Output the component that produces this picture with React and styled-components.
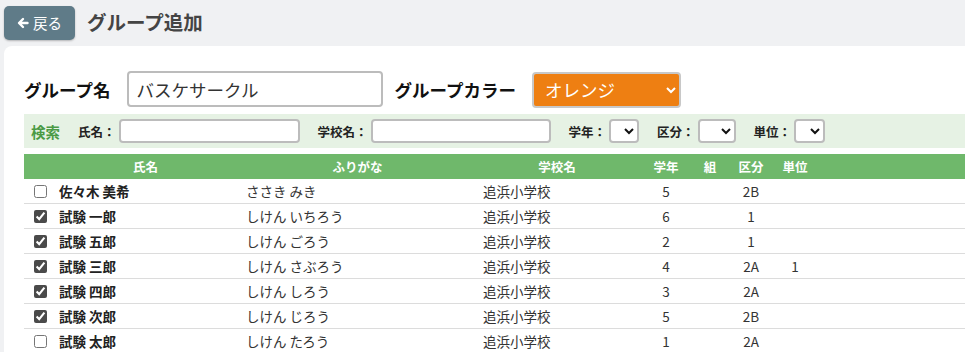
import React from "react";
import styled, { createGlobalStyle } from "styled-components";

const GlobalStyle = createGlobalStyle`
  html, body {
    margin: 0;
    padding: 0;
    background: #f0f1f3;
    overflow: hidden;
    font-family: "Noto Sans CJK JP", "Noto Sans", sans-serif;
    color: #333;
  }
  * { box-sizing: border-box; }
`;

const Page = styled.div`
  padding: 6px 0 0 4px;
  width: 1010px;
`;

const TopBar = styled.div`
  display: flex;
  align-items: center;
  gap: 12px;
  height: 34px;
`;

const BackButton = styled.button`
  display: flex;
  align-items: center;
  justify-content: center;
  gap: 4px;
  width: 71px;
  height: 34px;
  padding: 0 0 1px 0;
  border: none;
  border-radius: 5px;
  background: #5f7b88;
  color: #fff;
  font-family: inherit;
  font-size: 14.5px;
  box-shadow: 0 1px 2px rgba(0, 0, 0, 0.25);
`;

const Title = styled.h1`
  margin: 0 0 4px 0;
  font-size: 19.5px;
  font-weight: 700;
  color: #444;
`;

const Panel = styled.div`
  margin-top: 6px;
  background: #fff;
  border-radius: 8px 0 0 0;
  padding: 25px 0 40px 20px;
`;

const GroupRow = styled.div`
  display: flex;
  align-items: center;
  height: 36px;
`;

const BigLabel = styled.span`
  font-size: 17.5px;
  font-weight: 700;
  color: #111;
  margin-right: ${(p) => p.$gap}px;
`;

const TextInput = styled.input`
  width: ${(p) => p.$w}px;
  height: ${(p) => p.$h}px;
  border: 2px solid #bcbcbc;
  border-radius: 4px;
  padding: 0 ${(p) => (p.$big ? 7 : 4)}px;
  font-family: inherit;
  font-size: ${(p) => (p.$big ? 17.5 : 13)}px;
  color: #333;
  background: #fff;
  outline: none;
  margin-right: ${(p) => p.$mr || 0}px;
`;

const ColorSelect = styled.select`
  width: 149px;
  height: 36px;
  margin-top: 1px;
  border: 2px solid #c8c8c8;
  border-radius: 4px;
  background-color: #ee7f12;
  color: #fff;
  font-family: inherit;
  font-size: 17.5px;
  padding: 0 0 0 7px;
`;

const SearchBar = styled.div`
  margin-top: 7px;
  height: 34px;
  background: #e6f2e4;
  display: flex;
  align-items: center;
  padding-left: 7px;
  gap: 18px;
`;

const SearchTitle = styled.span`
  font-size: 14.5px;
  font-weight: 700;
  color: #4a9a45;
`;

const Field = styled.label`
  display: flex;
  align-items: center;
  gap: 3px;
  font-size: 12.5px;
  font-weight: 700;
  color: #222;
`;

const SmallSelect = styled.select`
  width: ${(p) => p.$w}px;
  height: 24px;
  border: 2px solid #bcbcbc;
  border-radius: 4px;
  background: #fff;
  color: #111;
  font-family: inherit;
  font-size: 12px;
`;

const Table = styled.div`
  margin-top: 6px;
`;

const COLS = "28px 187px 237px 162px 56px 32px 50px 38px 1fr";

const HeadRow = styled.div`
  display: grid;
  grid-template-columns: ${COLS};
  height: 25px;
  align-items: center;
  background: #6fb86b;
`;

const HeadCell = styled.div`
  text-align: center;
  white-space: nowrap;
  font-size: 12.5px;
  font-weight: 700;
  color: #fff;
`;

const Row = styled.div`
  display: grid;
  grid-template-columns: ${COLS};
  height: 25px;
  align-items: center;
  border-bottom: 1px solid #dcdcdc;
`;

const Cell = styled.div`
  white-space: nowrap;
  font-size: 13.5px;
  padding-left: ${(p) => (p.$center ? 0 : 7)}px;
  text-align: ${(p) => (p.$center ? "center" : "left")};
  font-weight: ${(p) => (p.$bold ? 700 : 400)};
  color: ${(p) => (p.$bold ? "#222" : "#333")};
`;

const CheckCell = styled.div`
  display: flex;
  align-items: center;
  padding-left: 10px;
`;

const Check = styled.input`
  width: 13px;
  height: 13px;
  margin: 0;
  accent-color: #4a4a4a;
`;

const ArrowIcon = () => (
  <svg width="12" height="12" viewBox="0 0 12 12" aria-hidden="true">
    <path
      d="M10.5 6H2.5M6 2L2 6l4 4"
      fill="none"
      stroke="#fff"
      strokeWidth="2.4"
      strokeLinecap="round"
      strokeLinejoin="round"
    />
  </svg>
);

const rows = [
  { c: false, n: "佐々木 美希", k: "ささき みき", s: "追浜小学校", g: "5", k2: "2B", u: "" },
  { c: true, n: "試験 一郎", k: "しけん いちろう", s: "追浜小学校", g: "6", k2: "1", u: "" },
  { c: true, n: "試験 五郎", k: "しけん ごろう", s: "追浜小学校", g: "2", k2: "1", u: "" },
  { c: true, n: "試験 三郎", k: "しけん さぶろう", s: "追浜小学校", g: "4", k2: "2A", u: "1" },
  { c: true, n: "試験 四郎", k: "しけん しろう", s: "追浜小学校", g: "3", k2: "2A", u: "" },
  { c: true, n: "試験 次郎", k: "しけん じろう", s: "追浜小学校", g: "5", k2: "2B", u: "" },
  { c: false, n: "試験 太郎", k: "しけん たろう", s: "追浜小学校", g: "1", k2: "2A", u: "" },
];

export default function App() {
  return (
    <>
      <GlobalStyle />
      <Page>
        <TopBar>
          <BackButton>
            <ArrowIcon />
            戻る
          </BackButton>
          <Title>グループ追加</Title>
        </TopBar>
        <Panel>
          <GroupRow>
            <BigLabel $gap={17}>グループ名</BigLabel>
            <TextInput $w={256} $h={36} $big $mr={11} defaultValue="バスケサークル" />
            <BigLabel $gap={16}>グループカラー</BigLabel>
            <ColorSelect defaultValue="orange">
              <option value="orange">オレンジ</option>
            </ColorSelect>
          </GroupRow>
          <SearchBar>
            <SearchTitle>検索</SearchTitle>
            <Field>
              氏名：
              <TextInput $w={181} $h={24} />
            </Field>
            <Field>
              学校名：
              <TextInput $w={180} $h={24} />
            </Field>
            <Field>
              学年：
              <SmallSelect $w={30}>
                <option value=""></option>
              </SmallSelect>
            </Field>
            <Field>
              区分：
              <SmallSelect $w={38}>
                <option value=""></option>
              </SmallSelect>
            </Field>
            <Field>
              単位：
              <SmallSelect $w={31}>
                <option value=""></option>
              </SmallSelect>
            </Field>
          </SearchBar>
          <Table>
            <HeadRow>
              <HeadCell />
              <HeadCell>氏名</HeadCell>
              <HeadCell>ふりがな</HeadCell>
              <HeadCell>学校名</HeadCell>
              <HeadCell>学年</HeadCell>
              <HeadCell>組</HeadCell>
              <HeadCell>区分</HeadCell>
              <HeadCell>単位</HeadCell>
              <HeadCell />
            </HeadRow>
            {rows.map((r, i) => (
              <Row key={i}>
                <CheckCell>
                  <Check type="checkbox" defaultChecked={r.c} />
                </CheckCell>
                <Cell $bold>{r.n}</Cell>
                <Cell>{r.k}</Cell>
                <Cell>{r.s}</Cell>
                <Cell $center>{r.g}</Cell>
                <Cell $center></Cell>
                <Cell $center>{r.k2}</Cell>
                <Cell $center>{r.u}</Cell>
                <Cell />
              </Row>
            ))}
          </Table>
        </Panel>
      </Page>
    </>
  );
}
